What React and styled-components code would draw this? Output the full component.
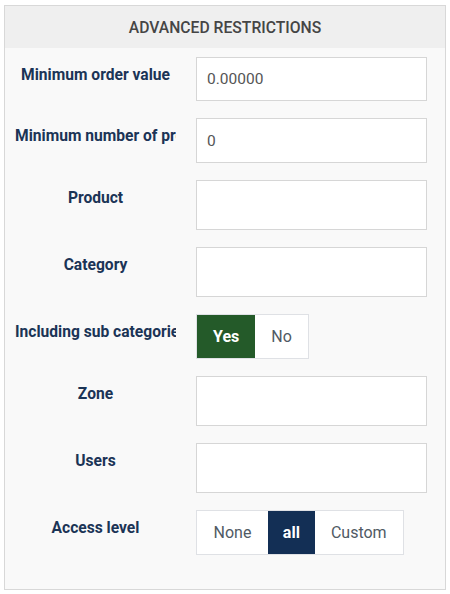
import React from "react";
import styled, { createGlobalStyle } from "styled-components";

const Global = createGlobalStyle`
  html, body { margin: 0; padding: 0; background: #ffffff; }
  body { font-family: Roboto, "Liberation Sans", Arial, sans-serif; }
  * { box-sizing: border-box; }
`;

const Panel = styled.section`
  margin: 5px 0 0 4px;
  width: 442px;
  height: 585px;
  border: 1px solid #d8d8d8;
  background: #f9f9f9;
`;

const Header = styled.h3`
  margin: 0;
  height: 42px;
  display: flex;
  align-items: center;
  justify-content: center;
  background: #efefef;
  color: #454545;
  font-size: 15.7px;
  font-weight: 500;
  letter-spacing: 0;
  text-transform: uppercase;
`;

const Body = styled.div`
  display: flex;
  flex-direction: column;
  gap: 17px;
  padding: 9px 18px 0 10px;
`;

const Row = styled.div`
  display: grid;
  grid-template-columns: 161px 231px;
  column-gap: 20px;
  align-items: start;
`;

const Label = styled.label`
  display: block;
  padding-top: 7px;
  line-height: 22px;
  font-size: 15.6px;
  font-weight: 700;
  color: #1b3456;
  text-align: center;
  white-space: nowrap;
  overflow: hidden;
`;

const Input = styled.div`
  width: 231px;
  height: ${(p) => p.$h}px;
  border: 1px solid #d6d6d6;
  background: #ffffff;
  display: flex;
  align-items: center;
  padding: 0 10px;
  font-size: 15.5px;
  color: #555555;
`;

const Group = styled.div`
  display: flex;
  height: 45px;
  border: 1px solid #dfe1e5;
  background: #ffffff;
  justify-self: start;
`;

const Opt = styled.div`
  display: flex;
  align-items: center;
  justify-content: center;
  padding: 0 ${(p) => p.$pad || 16}px;
  font-size: 16px;
  font-weight: ${(p) => (p.$active ? 700 : 400)};
  color: ${(p) => (p.$active ? "#ffffff" : "#505a64")};
  background: ${(p) => p.$bg || "#ffffff"};
`;

const rows = [
  { label: "Minimum order value", value: "0.00000", h: 44 },
  { label: "Minimum number of products", value: "0", h: 45 },
  { label: "Product", value: "", h: 50 },
  { label: "Category", value: "", h: 50 },
];

export default function App() {
  return (
    <>
      <Global />
      <Panel>
        <Header>Advanced restrictions</Header>
        <Body>
          {rows.map((r) => (
            <Row key={r.label}>
              <Label>{r.label}</Label>
              <Input $h={r.h}>{r.value}</Input>
            </Row>
          ))}
          <Row>
            <Label>Including sub categories</Label>
            <Group>
              <Opt $active $bg="#245a29">Yes</Opt>
              <Opt $pad={16}>No</Opt>
            </Group>
          </Row>
          <Row>
            <Label>Zone</Label>
            <Input $h={50} />
          </Row>
          <Row>
            <Label>Users</Label>
            <Input $h={50} />
          </Row>
          <Row>
            <Label>Access level</Label>
            <Group>
              <Opt $pad={16.5}>None</Opt>
              <Opt $active $bg="#132f55" $pad={15}>all</Opt>
              <Opt $pad={16}>Custom</Opt>
            </Group>
          </Row>
        </Body>
      </Panel>
    </>
  );
}
